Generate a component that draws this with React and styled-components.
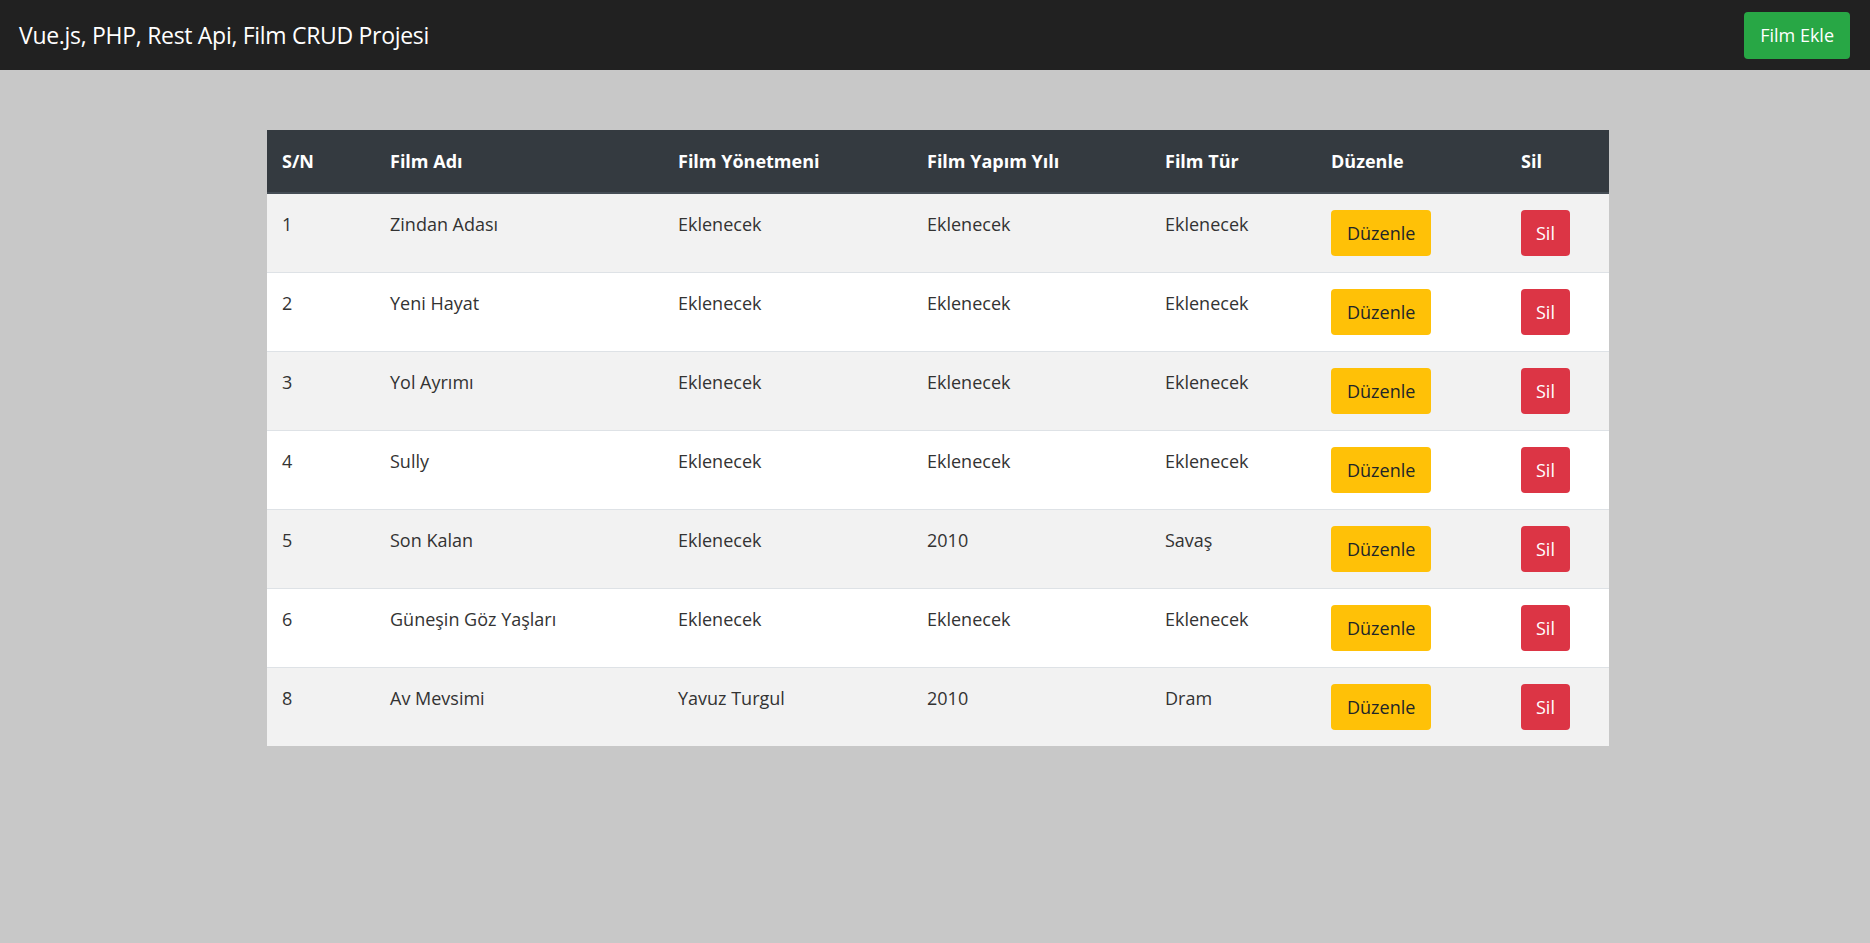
import React from 'react'
import styled, { createGlobalStyle } from 'styled-components'

const Global = createGlobalStyle`
  html, body { margin: 0; background: #c8c8c8; }
  body { font-family: "Open Sans", "Noto Sans", sans-serif; color: #212529; }
`

const Nav = styled.nav`
  height: 70px;
  background: #212121;
  display: flex;
  align-items: center;
  justify-content: space-between;
  padding: 0 20px 0 19px;
`

const Brand = styled.div`
  color: #fff;
  font-size: 23px;
  letter-spacing: -0.3px;
`

const Btn = styled.button`
  font-family: inherit;
  font-size: 18px;
  border: none;
  border-radius: 4px;
  padding: 0 ${p => p.$px || 16}px;
  height: ${p => p.$h || 46}px;
  cursor: pointer;
  color: ${p => p.$fg || '#fff'};
  background: ${p => p.$bg};
`

const Main = styled.main`
  display: flex;
  justify-content: center;
  padding-top: 60px;
`

const Table = styled.table`
  width: 1342px;
  border-collapse: collapse;
  margin-left: 6px;
  font-size: 18px;
`

const Th = styled.th`
  background: #343a40;
  color: #fff;
  text-align: left;
  font-weight: 700;
  height: 62px;
  padding: 0 15px;
  border-bottom: 2px solid #454d55;
  font-size: 18px;
`

const Tr = styled.tr`
  background: ${p => (p.$odd ? '#f2f2f2' : '#fff')};
  border-top: 1px solid #dee2e6;
`

const Td = styled.td`
  vertical-align: top;
  padding: 18px 15px 0;
  height: 79px;
  box-sizing: border-box;
  color: #333;
  &:has(button) { padding-top: 16px; }
`

const cols = [108, 288, 249, 238, 166, 190, 103]
const heads = ['S/N', 'Film Adı', 'Film Yönetmeni', 'Film Yapım Yılı', 'Film Tür', 'Düzenle', 'Sil']

const films = [
  ['1', 'Zindan Adası', 'Eklenecek', 'Eklenecek', 'Eklenecek'],
  ['2', 'Yeni Hayat', 'Eklenecek', 'Eklenecek', 'Eklenecek'],
  ['3', 'Yol Ayrımı', 'Eklenecek', 'Eklenecek', 'Eklenecek'],
  ['4', 'Sully', 'Eklenecek', 'Eklenecek', 'Eklenecek'],
  ['5', 'Son Kalan', 'Eklenecek', '2010', 'Savaş'],
  ['6', 'Güneşin Göz Yaşları', 'Eklenecek', 'Eklenecek', 'Eklenecek'],
  ['8', 'Av Mevsimi', 'Yavuz Turgul', '2010', 'Dram'],
]

export default function App() {
  return (
    <>
      <Global />
      <Nav>
        <Brand>Vue.js, PHP, Rest Api, Film CRUD Projesi</Brand>
        <Btn $bg="#28a745" $h={47} $px={16}>Film Ekle</Btn>
      </Nav>
      <Main>
        <Table>
          <colgroup>
            {cols.map((w, i) => <col key={i} style={{ width: w }} />)}
          </colgroup>
          <thead>
            <tr>{heads.map(h => <Th key={h}>{h}</Th>)}</tr>
          </thead>
          <tbody>
            {films.map((f, i) => (
              <Tr key={f[0]} $odd={i % 2 === 0}>
                {f.map((c, j) => <Td key={j}>{c}</Td>)}
                <Td><Btn $bg="#ffc107" $fg="#212529" $px={16}>Düzenle</Btn></Td>
                <Td><Btn $bg="#dc3545" $px={15}>Sil</Btn></Td>
              </Tr>
            ))}
          </tbody>
        </Table>
      </Main>
    </>
  )
}
